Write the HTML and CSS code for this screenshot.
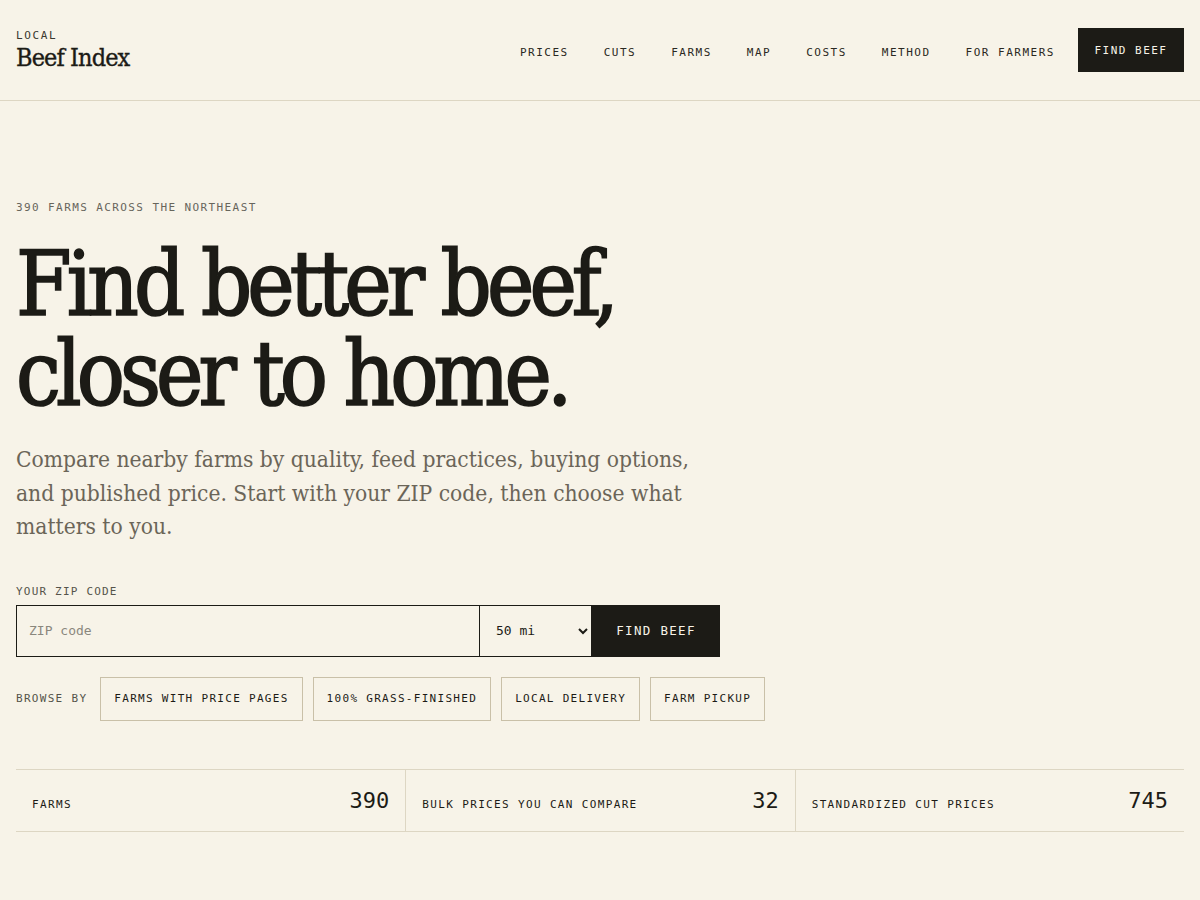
FILE: index.html
```html
<!DOCTYPE html>
<html lang="en">
<head>
<meta charset="utf-8">
<title>Local Beef Index</title>
<link rel="stylesheet" href="styles.css">
</head>
<body>
<header class="site-header">
  <a class="logo" href="#">
    <span class="logo-kicker">LOCAL</span>
    <span class="logo-name">Beef Index</span>
  </a>
  <nav class="nav">
    <a href="#">PRICES</a>
    <a href="#">CUTS</a>
    <a href="#">FARMS</a>
    <a href="#">MAP</a>
    <a href="#">COSTS</a>
    <a href="#">METHOD</a>
    <a href="#">FOR FARMERS</a>
    <a class="nav-cta" href="#">FIND BEEF</a>
  </nav>
</header>
<main class="hero">
  <p class="eyebrow">390 FARMS ACROSS THE NORTHEAST</p>
  <h1 class="headline">Find better beef,<br>closer to home.</h1>
  <p class="lede">Compare nearby farms by quality, feed practices, buying options, and published price. Start with your ZIP code, then choose what matters to you.</p>
  <form class="search">
    <label class="search-label" for="zip">YOUR ZIP CODE</label>
    <div class="search-row">
      <input id="zip" class="zip-input" type="text" placeholder="ZIP code">
      <select class="radius">
        <option>50 mi</option>
        <option>25 mi</option>
        <option>100 mi</option>
      </select>
      <button class="search-btn" type="button">FIND BEEF</button>
    </div>
  </form>
  <div class="browse">
    <span class="browse-label">BROWSE BY</span>
    <a class="chip" href="#">FARMS WITH PRICE PAGES</a>
    <a class="chip" href="#">100% GRASS-FINISHED</a>
    <a class="chip" href="#">LOCAL DELIVERY</a>
    <a class="chip" href="#">FARM PICKUP</a>
  </div>
  <section class="stats">
    <div class="stat"><span class="stat-label">FARMS</span><span class="stat-value">390</span></div>
    <div class="stat"><span class="stat-label">BULK PRICES YOU CAN COMPARE</span><span class="stat-value">32</span></div>
    <div class="stat"><span class="stat-label">STANDARDIZED CUT PRICES</span><span class="stat-value">745</span></div>
  </section>
</main>
</body>
</html>
```
FILE: styles.css
```css
* { box-sizing: border-box; }
html, body { margin: 0; padding: 0; }
body {
  background: #f7f3e8;
  color: #1c1b16;
  font-family: "DejaVu Sans Mono", monospace;
}
a { color: inherit; text-decoration: none; }

.site-header {
  height: 101px;
  border-bottom: 1px solid #ddd6c3;
  display: flex;
  align-items: center;
  justify-content: space-between;
  padding: 0 16px;
}
.logo { display: flex; flex-direction: column; padding-top: 2px; }
.logo-kicker {
  font-family: "DejaVu Sans Mono", monospace;
  font-size: 11px;
  letter-spacing: 1.6px;
  color: #3a382f;
  line-height: 14px;
}
.logo-name {
  font-family: "DejaVu Serif Condensed", "DejaVu Serif", serif;
  font-size: 25px;
  letter-spacing: -0.9px;
  line-height: 30px;
  -webkit-text-stroke: 0.35px #1c1b16;
}
.nav { display: flex; align-items: center; padding-top: 4px; }
.nav a {
  font-size: 11px;
  letter-spacing: 1.5px;
  margin-left: 35px;
  color: #2a2822;
}
.nav a.nav-cta {
  margin-left: 23px;
  background: #1c1b16;
  color: #f7f3e8;
  height: 44px;
  padding: 0 16.5px;
  display: flex;
  align-items: center;
  margin-top: -4px;
}

.hero { padding: 100px 16px 0; }
.eyebrow {
  margin: 0;
  font-size: 11px;
  letter-spacing: 1.4px;
  color: #67655c;
  line-height: 14px;
}
.headline {
  margin: 24px 0 0;
  font-family: "DejaVu Serif Condensed", "DejaVu Serif", serif;
  font-weight: 400;
  font-size: 89px;
  line-height: 90px;
  letter-spacing: -4.9px;
  color: #1c1b16;
  -webkit-text-stroke: 1.7px #1c1b16;
}
.lede {
  margin: 24px 0 0;
  max-width: 700px;
  font-family: "DejaVu Serif Condensed", "DejaVu Serif", serif;
  font-size: 22.6px;
  line-height: 33.5px;
  color: #6b6558;
}

.search { margin-top: 41px; }
.search-label {
  display: block;
  font-size: 11px;
  letter-spacing: 1.2px;
  color: #55534a;
  line-height: 14px;
}
.search-row { display: flex; margin-top: 6px; height: 52px; width: 704px; }
.zip-input {
  flex: 1;
  border: 1px solid #1c1b16;
  border-right: none;
  background: transparent;
  padding: 0 12px;
  font-family: "DejaVu Sans Mono", monospace;
  font-size: 13px;
  color: #1c1b16;
  outline: none;
}
.zip-input::placeholder { color: #8a877d; }
.radius {
  width: 113px;
  border: 1px solid #1c1b16;
  border-radius: 0;
  background: transparent;
  padding: 0 10px 0 12px;
  font-family: "DejaVu Sans Mono", monospace;
  font-size: 13px;
  color: #1c1b16;
}
.search-btn {
  width: 128px;
  border: none;
  background: #1c1b16;
  color: #f7f3e8;
  font-family: "DejaVu Sans Mono", monospace;
  font-size: 12.5px;
  letter-spacing: 1.3px;
  cursor: pointer;
}

.browse { display: flex; align-items: center; margin-top: 20px; gap: 10px; }
.browse-label {
  font-size: 11px;
  letter-spacing: 1.3px;
  color: #55534a;
  margin-right: 3px;
}
.chip {
  height: 44px;
  display: flex;
  align-items: center;
  padding: 0 13px;
  border: 1px solid #c9c0a8;
  font-size: 11px;
  letter-spacing: 1.3px;
  color: #1c1b16;
}

.stats {
  margin-top: 48px;
  display: grid;
  grid-template-columns: 1fr 1fr 1fr;
  border-top: 1px solid #ddd6c3;
  border-bottom: 1px solid #ddd6c3;
}
.stat {
  height: 61px;
  display: flex;
  justify-content: space-between;
  align-items: center;
  padding: 0 16px;
}
.stat + .stat { border-left: 1px solid #ddd6c3; }
.stat-label { font-size: 11px; letter-spacing: 1.35px; padding-top: 8px; }
.stat-value { font-size: 22px; }
```
